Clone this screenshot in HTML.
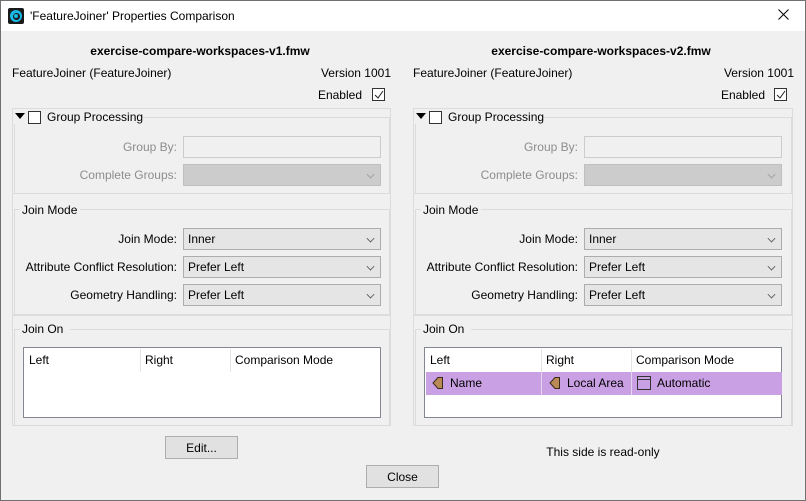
<!DOCTYPE html><html><head><style>
*{box-sizing:border-box;margin:0;padding:0}
body{width:806px;height:501px;background:#f0f0f0;font-family:"Liberation Sans",sans-serif;font-size:12px;color:#000;position:relative;overflow:hidden}
.a{position:absolute}
.win{left:0;top:0;width:806px;height:501px;border:1px solid #707070}
.title{left:1px;top:1px;width:804px;height:30px;background:#fff}
.side{top:0;width:400px;height:501px}
.box{border:1px solid #dcdcdc}
.lbl{text-align:right;white-space:nowrap}
.dis{color:#8d8d8d}
.inp{background:#f0f0f0;border:1px solid #ccc;height:22px;width:198px;left:183px}
.cmb{background:#e5e5e5;border:1px solid #adadad;height:22px;width:198px;left:183px;padding:3px 0 0 4px}
.cmb.d{background:#ccc;border-color:#bfbfbf}
.chev{position:absolute;right:6px;top:6px;width:7px;height:7px;border-right:1px solid #555;border-bottom:1px solid #555;transform:rotate(45deg) scale(.8);transform-origin:center}
.cb{width:13px;height:13px;border:1px solid #333;background:#fff}
.btn{background:#e1e1e1;border:1px solid #adadad;text-align:center;padding-top:4px;height:23px;width:73px}
.tbl{left:23px;top:347px;width:358px;height:71px;background:#fff;border:1px solid #828790}
.hd{top:1px;height:23px;padding-top:5px}
.vd{top:1px;width:1px;height:23px;background:#e5e5e5}
.row{left:1px;top:24px;width:356px;height:23px;background:#c9a0e3}
.arr{width:12px;height:14px}
</style></head><body>
<div class="a win"></div>
<div class="a title"></div>
<div class="a" style="left:8px;top:8px;width:16px;height:16px;background:#1a1a1a;border-radius:2px"></div>
<div class="a" style="left:10px;top:10px;width:12px;height:12px;border-radius:50%;background:#18b9e6"></div>
<div class="a" style="left:12.5px;top:12.5px;width:7px;height:7px;border-radius:50%;background:#1a1a1a"></div>
<div class="a" style="left:14px;top:14px;width:4px;height:4px;border-radius:50%;background:#18b9e6"></div>
<div class="a" style="left:30px;top:9px">'FeatureJoiner' Properties Comparison</div>
<svg class="a" style="left:778px;top:9px" width="11" height="11" viewBox="0 0 11 11"><path d="M0.5 0.5 L10.5 10.5 M10.5 0.5 L0.5 10.5" stroke="#000" stroke-width="1"/></svg>

<!-- LEFT -->
<div class="a side" style="left:0">
<div class="a" style="left:0;width:400px;top:44px;text-align:center;font-weight:bold">exercise-compare-workspaces-v1.fmw</div>
<div class="a" style="left:12px;top:66px">FeatureJoiner (FeatureJoiner)</div>
<div class="a" style="right:9px;top:66px">Version 1001</div>
<div class="a" style="right:38px;top:88px">Enabled</div>
<div class="a cb" style="left:372px;top:88px"><svg class="a" style="left:1px;top:1px" width="10" height="10" viewBox="0 0 10 10"><path d="M1 5 L4 8 L9 1" fill="none" stroke="#222" stroke-width="1"/></svg></div>
<div class="a box" style="left:12px;top:108px;width:379px;height:86px"></div>
<div class="a box" style="left:14px;top:117px;width:376px;height:77px;border-bottom:none"></div>
<div class="a" style="left:14px;top:110px;width:128px;height:14px;background:#f0f0f0"></div>
<div class="a" style="left:15px;top:113px;width:0;height:0;border-left:5px solid transparent;border-right:5px solid transparent;border-top:6px solid #000"></div>
<div class="a cb" style="left:28px;top:111px"></div>
<div class="a" style="left:47px;top:110px">Group Processing</div>
<div class="a lbl dis" style="right:223px;top:140px">Group By:</div>
<div class="a inp" style="top:136px"></div>
<div class="a lbl dis" style="right:223px;top:168px">Complete Groups:</div>
<div class="a cmb d" style="top:164px"><span class="chev" style="border-color:#999"></span></div>
<div class="a box" style="left:12px;top:193px;width:379px;height:122px"></div>
<div class="a box" style="left:14px;top:209px;width:376px;height:106px;border-bottom:none"></div>
<div class="a" style="left:20px;top:203px;width:60px;height:14px;background:#f0f0f0"></div>
<div class="a" style="left:22px;top:203px">Join Mode</div>
<div class="a lbl" style="right:223px;top:232px">Join Mode:</div>
<div class="a cmb" style="top:228px">Inner<span class="chev"></span></div>
<div class="a lbl" style="right:223px;top:260px">Attribute Conflict Resolution:</div>
<div class="a cmb" style="top:256px">Prefer Left<span class="chev"></span></div>
<div class="a lbl" style="right:223px;top:288px">Geometry Handling:</div>
<div class="a cmb" style="top:284px">Prefer Left<span class="chev"></span></div>
<div class="a box" style="left:12px;top:315px;width:379px;height:111px"></div>
<div class="a box" style="left:14px;top:329px;width:376px;height:97px;border-bottom:none"></div>
<div class="a" style="left:20px;top:323px;width:50px;height:14px;background:#f0f0f0"></div>
<div class="a" style="left:22px;top:322px">Join On</div>
<div class="a tbl">
<div class="a hd" style="left:5px;padding-top:4px">Left</div>
<div class="a vd" style="left:116px"></div>
<div class="a hd" style="left:121px;padding-top:4px">Right</div>
<div class="a vd" style="left:206px"></div>
<div class="a hd" style="left:211px;padding-top:4px">Comparison Mode</div>
</div>
<div class="a btn" style="left:165px;top:436px">Edit...</div>
</div>

<!-- RIGHT -->
<div class="a side" style="left:401px">
<div class="a" style="left:0;width:400px;top:44px;text-align:center;font-weight:bold">exercise-compare-workspaces-v2.fmw</div>
<div class="a" style="left:12px;top:66px">FeatureJoiner (FeatureJoiner)</div>
<div class="a" style="right:7px;top:66px">Version 1001</div>
<div class="a" style="right:36px;top:88px">Enabled</div>
<div class="a cb" style="left:373px;top:88px"><svg class="a" style="left:1px;top:1px" width="10" height="10" viewBox="0 0 10 10"><path d="M1 5 L4 8 L9 1" fill="none" stroke="#222" stroke-width="1"/></svg></div>
<div class="a box" style="left:12px;top:108px;width:380px;height:86px"></div>
<div class="a box" style="left:14px;top:117px;width:377px;height:77px;border-bottom:none"></div>
<div class="a" style="left:14px;top:110px;width:128px;height:14px;background:#f0f0f0"></div>
<div class="a" style="left:15px;top:113px;width:0;height:0;border-left:5px solid transparent;border-right:5px solid transparent;border-top:6px solid #000"></div>
<div class="a cb" style="left:28px;top:111px"></div>
<div class="a" style="left:47px;top:110px">Group Processing</div>
<div class="a lbl dis" style="right:223px;top:140px">Group By:</div>
<div class="a inp" style="top:136px"></div>
<div class="a lbl dis" style="right:223px;top:168px">Complete Groups:</div>
<div class="a cmb d" style="top:164px"><span class="chev" style="border-color:#999"></span></div>
<div class="a box" style="left:12px;top:193px;width:380px;height:122px"></div>
<div class="a box" style="left:14px;top:209px;width:377px;height:106px;border-bottom:none"></div>
<div class="a" style="left:20px;top:203px;width:60px;height:14px;background:#f0f0f0"></div>
<div class="a" style="left:22px;top:203px">Join Mode</div>
<div class="a lbl" style="right:223px;top:232px">Join Mode:</div>
<div class="a cmb" style="top:228px">Inner<span class="chev"></span></div>
<div class="a lbl" style="right:223px;top:260px">Attribute Conflict Resolution:</div>
<div class="a cmb" style="top:256px">Prefer Left<span class="chev"></span></div>
<div class="a lbl" style="right:223px;top:288px">Geometry Handling:</div>
<div class="a cmb" style="top:284px">Prefer Left<span class="chev"></span></div>
<div class="a box" style="left:12px;top:315px;width:380px;height:111px"></div>
<div class="a box" style="left:14px;top:329px;width:377px;height:97px;border-bottom:none"></div>
<div class="a" style="left:20px;top:323px;width:50px;height:14px;background:#f0f0f0"></div>
<div class="a" style="left:22px;top:322px">Join On</div>
<div class="a tbl">
<div class="a hd" style="left:5px;padding-top:4px">Left</div>
<div class="a vd" style="left:116px"></div>
<div class="a hd" style="left:121px;padding-top:4px">Right</div>
<div class="a vd" style="left:206px"></div>
<div class="a hd" style="left:211px;padding-top:4px">Comparison Mode</div>
<div class="a row">
 <svg class="a arr" style="left:6px;top:4px" viewBox="0 0 12 14"><path d="M1 7 L6 1.5 H10.5 V12.5 H6 Z" fill="#b98a55" stroke="#3a2a18" stroke-width="1"/></svg>
 <div class="a" style="left:24px;top:4px">Name</div>
 <div class="a" style="left:115px;top:0;width:1px;height:23px;background:#e5d5ef"></div>
 <svg class="a arr" style="left:123px;top:4px" viewBox="0 0 12 14"><path d="M1 7 L6 1.5 H10.5 V12.5 H6 Z" fill="#b98a55" stroke="#3a2a18" stroke-width="1"/></svg>
 <div class="a" style="left:141px;top:4px">Local Area</div>
 <div class="a" style="left:205px;top:0;width:1px;height:23px;background:#e5d5ef"></div>
 <div class="a" style="left:211px;top:4px;width:14px;height:14px;border:1px solid #333"><div style="margin-top:2px;border-top:1px solid #333"></div></div>
 <div class="a" style="left:231px;top:4px">Automatic</div>
</div>
</div>
<div class="a" style="left:0;width:404px;top:445px;text-align:center">This side is read-only</div>
</div>

<div class="a btn" style="left:366px;top:465px">Close</div>
</body></html>
